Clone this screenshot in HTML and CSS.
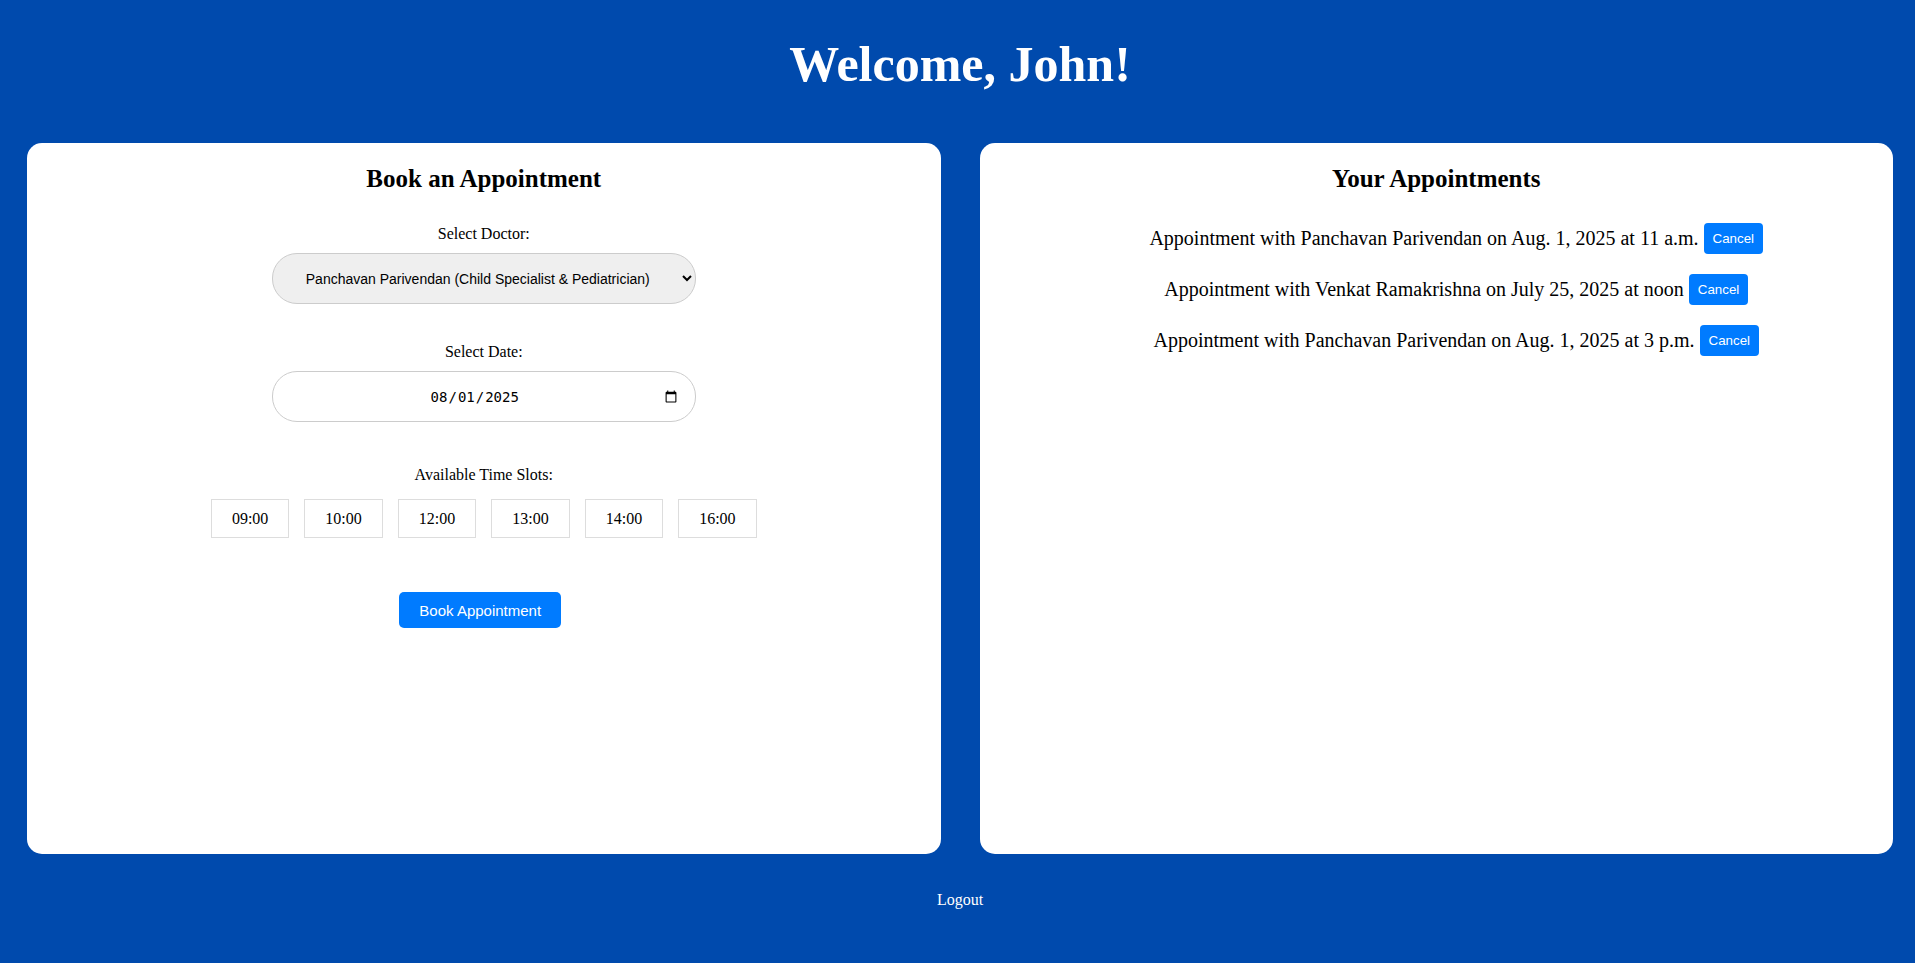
FILE: index.html
```html
<!DOCTYPE html>
<html lang="en">
<head>
<meta charset="utf-8">
<title>Patient Dashboard</title>
<link rel="stylesheet" href="styles.css">
</head>
<body>
<div class="page">
  <header class="page-header">
    <h1 class="welcome">Welcome, John!</h1>
  </header>
  <main class="panels">
    <section class="card">
      <h2 class="card-title">Book an Appointment</h2>
      <form class="booking-form">
        <label class="field-label" for="doctor">Select Doctor:</label>
        <select id="doctor" class="pill-select">
          <option>Panchavan Parivendan (Child Specialist &amp; Pediatrician)</option>
          <option>Venkat Ramakrishna</option>
        </select>
        <label class="field-label" for="date">Select Date:</label>
        <input id="date" type="date" class="pill-date" value="2025-08-01">
        <label class="field-label slots-label">Available Time Slots:</label>
        <div class="slots">
          <button type="button" class="slot">09:00</button>
          <button type="button" class="slot">10:00</button>
          <button type="button" class="slot">12:00</button>
          <button type="button" class="slot">13:00</button>
          <button type="button" class="slot">14:00</button>
          <button type="button" class="slot">16:00</button>
        </div>
        <button type="button" class="primary-btn">Book Appointment</button>
      </form>
    </section>
    <section class="card">
      <h2 class="card-title">Your Appointments</h2>
      <ul class="appt-list">
        <li class="appt"><span class="appt-text">Appointment with Panchavan Parivendan on Aug. 1, 2025 at 11 a.m.</span><button type="button" class="cancel-btn">Cancel</button></li>
        <li class="appt"><span class="appt-text">Appointment with Venkat Ramakrishna on July 25, 2025 at noon</span><button type="button" class="cancel-btn">Cancel</button></li>
        <li class="appt"><span class="appt-text">Appointment with Panchavan Parivendan on Aug. 1, 2025 at 3 p.m.</span><button type="button" class="cancel-btn">Cancel</button></li>
      </ul>
    </section>
  </main>
  <footer class="page-footer">
    <a href="#" class="logout">Logout</a>
  </footer>
</div>
</body>
</html>
```
FILE: styles.css
```css
html, body {
  margin: 0;
  padding: 0;
  overflow: hidden;
}

body {
  background: #004aad;
  font-family: "Liberation Serif", "Times New Roman", serif;
  color: #000;
  min-height: 963px;
}

.page {
  width: 1920px;
}

.page-header {
  padding-top: 35px;
  text-align: center;
}

.welcome {
  margin: 0;
  font-size: 50px;
  font-weight: bold;
  color: #fff;
}

.panels {
  display: flex;
  gap: 39px;
  padding: 0 27px;
  margin-top: 50px;
}

.card {
  flex: 1 1 0;
  background: #fff;
  border-radius: 15px;
  padding: 22px 20px 20px;
  min-height: 711px;
  box-sizing: border-box;
  text-align: center;
}

.card-title {
  margin: 0;
  font-size: 25px;
  font-weight: bold;
}

.booking-form {
  display: flex;
  flex-direction: column;
  align-items: center;
  margin-top: 32px;
}

.field-label {
  display: block;
  font-size: 16px;
  margin-bottom: 10px;
}

.pill-select {
  width: 424px;
  height: 51px;
  box-sizing: border-box;
  padding: 0 15px;
  border: 1px solid #ccc;
  border-radius: 25px;
  background-color: #efefef;
  font-family: "Liberation Sans", Arial, sans-serif;
  font-size: 14px;
  color: #000;
  text-align: center;
  text-align-last: center;
  margin-bottom: 39px;
}

.pill-date {
  width: 424px;
  height: 51px;
  box-sizing: border-box;
  padding: 0 15px;
  border: 1px solid #ccc;
  border-radius: 25px;
  background-color: #fff;
  font-size: 14px;
  color: #000;
  text-align: center;
  margin-bottom: 44px;
}

.slots-label {
  margin-bottom: 15px;
}

.slots {
  display: flex;
  justify-content: center;
  gap: 15px;
  margin-bottom: 54px;
}

.slot {
  height: 39px;
  padding: 0 20px;
  border: 1px solid #ddd;
  background: #fff;
  font-family: "Liberation Serif", "Times New Roman", serif;
  font-size: 16px;
  color: #000;
  line-height: 37px;
  border-radius: 0;
}

.primary-btn {
  height: 36px;
  padding: 0 20px;
  margin-right: 7px;
  border: none;
  border-radius: 5px;
  background: #007bff;
  color: #fff;
  font-family: "Liberation Sans", Arial, sans-serif;
  font-size: 15px;
}

.appt-list {
  list-style: none;
  margin: 30px 0 0;
  padding: 0 0 0 40px;
}

.appt {
  display: flex;
  justify-content: center;
  align-items: center;
  gap: 5px;
  margin-bottom: 20px;
  font-size: 20px;
}

.cancel-btn {
  padding: 8px 9px;
  border: none;
  border-radius: 4px;
  background: #007bff;
  color: #fff;
  font-family: "Liberation Sans", Arial, sans-serif;
  font-size: 13.333px;
}

.page-footer {
  margin-top: 37px;
  text-align: center;
}

.logout {
  color: #fff;
  text-decoration: none;
  font-size: 16px;
}
```
